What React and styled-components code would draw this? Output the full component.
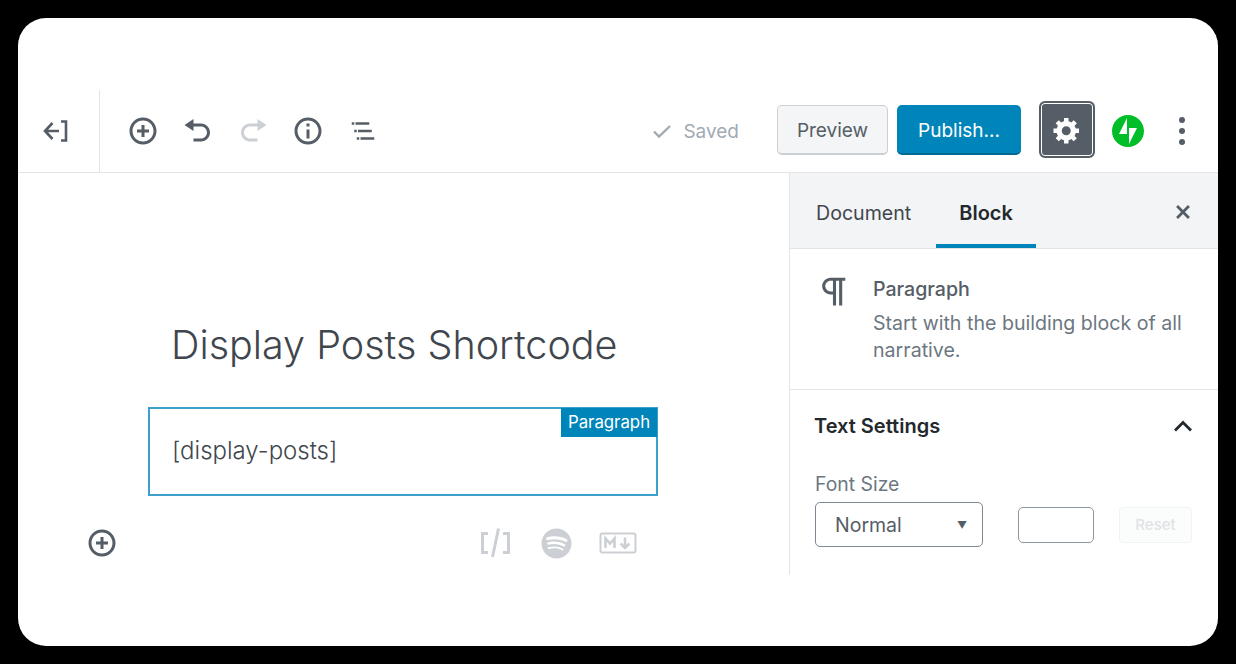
import React from "react";
import styled, { createGlobalStyle } from "styled-components";
import { FaSpotify } from "react-icons/fa";

const GlobalStyle = createGlobalStyle`
  html, body {
    margin: 0;
    height: 100%;
    background: #000;
  }
  * {
    box-sizing: border-box;
  }
`;

function Icon({ d, size = 30, box = 20, color = "#555d66" }) {
  return (
    <svg width={size} height={size} viewBox={`0 0 ${box} ${box}`} fill={color}>
      <path d={d} />
    </svg>
  );
}

const PLUS =
  "M10 1c-5 0-9 4-9 9s4 9 9 9 9-4 9-9-4-9-9-9zm0 16c-3.9 0-7-3.1-7-7s3.1-7 7-7 7 3.1 7 7-3.1 7-7 7zm1-11H9v3H6v2h3v3h2v-3h3V9h-3V6z";
const UNDO =
  "M12 5H7V2L1 6l6 4V7h5c2.2 0 4 1.8 4 4s-1.8 4-4 4H7v2h5c3.3 0 6-2.7 6-6s-2.7-6-6-6z";
const REDO =
  "M8 5h5V2l6 4-6 4V7H8c-2.2 0-4 1.8-4 4s1.8 4 4 4h5v2H8c-3.3 0-6-2.7-6-6s2.7-6 6-6z";
const INFO =
  "M10 1c-5 0-9 4-9 9s4 9 9 9 9-4 9-9-4-9-9-9zm0 16c-3.9 0-7-3.1-7-7s3.1-7 7-7 7 3.1 7 7-3.1 7-7 7zM9 9h2v6H9V9zm0-4h2v2H9V5z";
const LIST =
  "M5 5H3v2h2V5zm3 8h11v-2H8v2zm9-8H6v2h11V5zM7 11H5v2h2v-2zm0 8h2v-2H7v2zm3-2v2h11v-2H10z";
const GEAR =
  "M18 12h-2.18c-.17.7-.44 1.35-.81 1.93l1.54 1.54-2.1 2.1-1.54-1.54c-.58.36-1.23.63-1.91.79V19H8v-2.18c-.68-.16-1.33-.43-1.91-.79l-1.54 1.54-2.12-2.12 1.54-1.54c-.36-.58-.63-1.23-.79-1.91H1V9.03h2.17c.16-.7.44-1.35.8-1.94L2.43 5.55l2.1-2.1 1.54 1.54c.58-.37 1.24-.64 1.93-.81V2h3v2.18c.68.16 1.33.43 1.91.79l1.54-1.54 2.12 2.12-1.54 1.54c.36.59.64 1.24.8 1.94H18V12zm-8.5 1.5c1.66 0 3-1.34 3-3s-1.34-3-3-3-3 1.34-3 3 1.34 3 3 3z";
const CLOSE =
  "M14.95 6.46L11.41 10l3.54 3.54-1.41 1.41L10 11.42l-3.53 3.53-1.42-1.42L8.58 10 5.05 6.47l1.42-1.42L10 8.58l3.54-3.53z";
const PILCROW =
  "M11 5v7H9.5C7.6 12 6 10.4 6 8.5S7.6 5 9.5 5H11m8-2H9.5C6.5 3 4 5.5 4 8.5S6.5 14 9.5 14H11v7h2V5h2v16h2V5h2V3z";
const JETPACK =
  "M16 0C7.2 0 0 7.2 0 16s7.2 16 16 16 16-7.2 16-16S24.8 0 16 0zM15 19H7l8-16v16zm2 10V13h8l-8 16z";

export default function App() {
  return (
    <Page>
      <GlobalStyle />
      <Card>
        <Toolbar>
          <BackBox>
            <svg width="26" height="24" viewBox="0 0 26 24" fill="none" stroke="#555d66" strokeWidth="2.6">
              <path d="M17 12H3M10.500 4L3 12l7.500 8M19 2.500h5v19h-5" />
            </svg>
          </BackBox>
          <ToolGroup>
            <ToolButton><Icon d={PLUS} /></ToolButton>
            <ToolButton><Icon d={UNDO} /></ToolButton>
            <ToolButton><Icon d={REDO} color="#ccd0d4" /></ToolButton>
            <ToolButton><Icon d={INFO} /></ToolButton>
            <ToolButton><Icon d={LIST} box={24} /></ToolButton>
          </ToolGroup>
          <Actions>
            <Saved>
              <svg width="20" height="20" viewBox="0 0 20 20" fill="none" stroke="#a2aab2" strokeWidth="2.400">
                <path d="M2 10.500l5 5L18 5" />
              </svg>
              Saved
            </Saved>
            <PreviewButton>Preview</PreviewButton>
            <PublishButton>Publish...</PublishButton>
            <GearButton><Icon d={GEAR} size={30} color="#fff" /></GearButton>
            <JetpackBox><Icon d={JETPACK} size={32} box={32} color="#00be28" /></JetpackBox>
            <MoreBox>
              <Dot />
              <Dot />
              <Dot />
            </MoreBox>
          </Actions>
        </Toolbar>
        <Main>
          <Editor>
            <Title>Display Posts Shortcode</Title>
            <Block>
              <BlockLabel>Paragraph</BlockLabel>
              [display-posts]
            </Block>
            <InserterRow>
              <Icon d={PLUS} size={30} />
              <QuickBlocks>
                <svg width="35" height="32" viewBox="0 0 35 32" fill="none" stroke="#ccd0d4" strokeWidth="3">
                  <path d="M9 6.500H3.500v19H9M24 6.500h5.500v19H24M19.500 1.500L13.500 30" />
                </svg>
                <FaSpotify size={31} color="#ccd0d4" />
                <svg width="38" height="24" viewBox="0 0 38 24" fill="none" stroke="#ccd0d4">
                  <rect x="1.500" y="2.500" width="35" height="19" rx="2" strokeWidth="2" />
                  <path d="M6.500 17V7.500l4.500 5 4.500-5V17" strokeWidth="2.600" />
                  <path d="M26 6.500V16M21.500 12.500L26 17l4.500-4.500" strokeWidth="2.600" />
                </svg>
              </QuickBlocks>
            </InserterRow>
          </Editor>
          <Sidebar>
            <SidebarHead>
              <Tab>Document</Tab>
              <Tab $active>Block</Tab>
              <CloseBox><Icon d={CLOSE} size={28} /></CloseBox>
            </SidebarHead>
            <BlockCard>
              <BlockIcon><Icon d={PILCROW} size={37} box={24} /></BlockIcon>
              <BlockInfo>
                <BlockName>Paragraph</BlockName>
                <BlockDesc>Start with the building block of all narrative.</BlockDesc>
              </BlockInfo>
            </BlockCard>
            <Panel>
              <PanelHead>
                Text Settings
                <svg width="20" height="12" viewBox="0 0 20 12" fill="none" stroke="#23282d" strokeWidth="2.800">
                  <path d="M2 10.500l8-8 8 8" />
                </svg>
              </PanelHead>
              <FieldLabel>Font Size</FieldLabel>
              <FontRow>
                <SelectBox>
                  Normal
                  <Caret>▼</Caret>
                </SelectBox>
                <SizeInput />
                <ResetButton>Reset</ResetButton>
              </FontRow>
            </Panel>
          </Sidebar>
        </Main>
      </Card>
    </Page>
  );
}

const Page = styled.div`
  height: 100vh;
  padding: 18px;
  background: #000;
  font-family: Inter, "Liberation Sans", sans-serif;
`;
const Card = styled.div`
  width: 1200px;
  height: 628px;
  padding-top: 72px;
  background: #fff;
  border-radius: 28px;
  overflow: hidden;
`;
const Toolbar = styled.div`
  display: flex;
  align-items: stretch;
  height: 83px;
  border-bottom: 1px solid #e2e4e7;
`;
const BackBox = styled.div`
  display: flex;
  align-items: center;
  justify-content: center;
  width: 82px;
  padding: 0 8px 0 0;
  border-right: 1px solid #e2e4e7;
`;
const ToolGroup = styled.div`
  display: flex;
  align-items: center;
  padding-left: 15px;
`;
const ToolButton = styled.div`
  display: flex;
  align-items: center;
  justify-content: center;
  width: 55px;
  height: 50px;
  margin-top: -1px;
`;
const Actions = styled.div`
  display: flex;
  align-items: center;
  margin-left: auto;
  margin-top: -3px;
`;
const Saved = styled.div`
  display: flex;
  align-items: center;
  gap: 11px;
  margin-right: 38px;
  padding-top: 3px;
  font-size: 19px;
  color: #a2aab2;
`;
const PreviewButton = styled.div`
  display: flex;
  align-items: center;
  justify-content: center;
  width: 111px;
  height: 50px;
  margin-right: 9px;
  padding-top: 3px;
  font-size: 19px;
  color: #555d66;
  background: #f3f5f6;
  border: 1px solid #ccd0d4;
  border-bottom-width: 2px;
  border-radius: 5px;
`;
const PublishButton = styled.div`
  display: flex;
  align-items: center;
  justify-content: center;
  width: 124px;
  height: 50px;
  margin-right: 18px;
  padding-top: 3px;
  font-size: 19px;
  color: #fff;
  background: #0085ba;
  border-bottom: 2px solid #006a95;
  border-radius: 5px;
`;
const GearButton = styled.div`
  display: flex;
  align-items: center;
  justify-content: center;
  width: 56px;
  height: 57px;
  margin-right: 17px;
  padding-top: 1px;
  background: #555d66;
  border: 2px solid #555d66;
  border-radius: 6px;
  box-shadow: inset 0 0 0 1px #fff;
`;
const JetpackBox = styled.div`
  display: flex;
  margin: 2px 35px 0 0;
`;
const MoreBox = styled.div`
  display: flex;
  flex-direction: column;
  gap: 5px;
  margin: 2px 33px 0 0;
`;
const Dot = styled.span`
  width: 6px;
  height: 6px;
  border-radius: 50%;
  background: #555d66;
`;
const Main = styled.div`
  display: flex;
  height: 402px;
`;
const Editor = styled.div`
  flex: 1;
  padding: 149px 0 0 130px;
`;
const Title = styled.h1`
  margin: 0 0 39px;
  padding-left: 23px;
  font-family: Inter, sans-serif;
  font-size: 39.500px;
  font-weight: 300;
  line-height: 46px;
  color: #40464d;
`;
const Block = styled.div`
  position: relative;
  width: 510px;
  height: 89px;
  padding: 26px 22px;
  font-family: Inter, sans-serif;
  font-size: 24px;
  font-weight: 300;
  line-height: 32px;
  color: #40464d;
  border: 2px solid #3d9fcc;
`;
const BlockLabel = styled.span`
  position: absolute;
  top: -1px;
  right: -1px;
  width: 96px;
  height: 29px;
  font-family: Inter, sans-serif;
  font-size: 16.800px;
  font-weight: 400;
  line-height: 29px;
  text-align: center;
  color: #fff;
  background: #0085ba;
`;
const InserterRow = styled.div`
  display: flex;
  align-items: center;
  justify-content: space-between;
  width: 550px;
  margin: 31px 0 0 -61px;
`;
const QuickBlocks = styled.div`
  display: flex;
  align-items: center;
  gap: 27px;
`;
const Sidebar = styled.div`
  display: flex;
  flex-direction: column;
  width: 429px;
  border-left: 1px solid #e2e4e7;
`;
const SidebarHead = styled.div`
  display: flex;
  align-items: stretch;
  gap: 2px;
  height: 76px;
  padding-left: 3px;
  background: #f3f4f5;
  border-bottom: 1px solid #e2e4e7;
`;
const Tab = styled.div`
  display: flex;
  align-items: center;
  height: 75px;
  padding: 8px 23px 0;
  font-size: ${(p) => (p.$active ? "20px" : "19.600px")};
  font-weight: ${(p) => (p.$active ? 600 : 400)};
  color: ${(p) => (p.$active ? "#23282d" : "#40464d")};
  border-bottom: 4px solid ${(p) => (p.$active ? "#0085ba" : "transparent")};
`;
const CloseBox = styled.div`
  display: flex;
  align-items: center;
  margin-left: auto;
  padding: 2px 21px 0 0;
`;
const BlockCard = styled.div`
  display: flex;
  gap: 20px;
  height: 141px;
  padding: 24px 20px 0 26px;
  border-bottom: 1px solid #e2e4e7;
`;
const BlockIcon = styled.div`
  flex: none;
  width: 37px;
  height: 37px;
`;
const BlockInfo = styled.div`
  display: flex;
  flex-direction: column;
  margin-top: 2px;
`;
const BlockName = styled.div`
  font-size: 19.600px;
  font-weight: 500;
  line-height: 28px;
  color: #555d66;
`;
const BlockDesc = styled.div`
  margin-top: 7px;
  font-size: 19.600px;
  line-height: 27px;
  color: #6c7781;
`;
const Panel = styled.div`
  padding: 21px 25px 0 24px;
`;
const PanelHead = styled.div`
  display: flex;
  align-items: center;
  justify-content: space-between;
  height: 30px;
  font-size: 20px;
  font-weight: 600;
  color: #23282d;
`;
const FieldLabel = styled.div`
  margin: 29px 0 0 1px;
  font-size: 19.400px;
  line-height: 28px;
  color: #6c7781;
`;
const FontRow = styled.div`
  display: flex;
  align-items: center;
  margin: 4px 0 0 1px;
`;
const SelectBox = styled.div`
  display: flex;
  align-items: center;
  justify-content: space-between;
  width: 168px;
  height: 45px;
  padding: 0 15px 0 19px;
  font-size: 19.500px;
  color: #555d66;
  border: 1px solid #7e8993;
  border-radius: 5px;
`;
const Caret = styled.span`
  font-size: 10px;
  color: #555d66;
`;
const SizeInput = styled.div`
  width: 76px;
  height: 36px;
  margin-left: 35px;
  border: 1px solid #8d96a0;
  border-radius: 5px;
`;
const ResetButton = styled.div`
  display: flex;
  align-items: center;
  justify-content: center;
  width: 73px;
  height: 36px;
  margin-left: 25px;
  font-size: 15px;
  font-weight: 500;
  color: #dfe3e5;
  background: #fbfcfc;
  border: 1px solid #f0f2f3;
  border-radius: 4px;
`;
